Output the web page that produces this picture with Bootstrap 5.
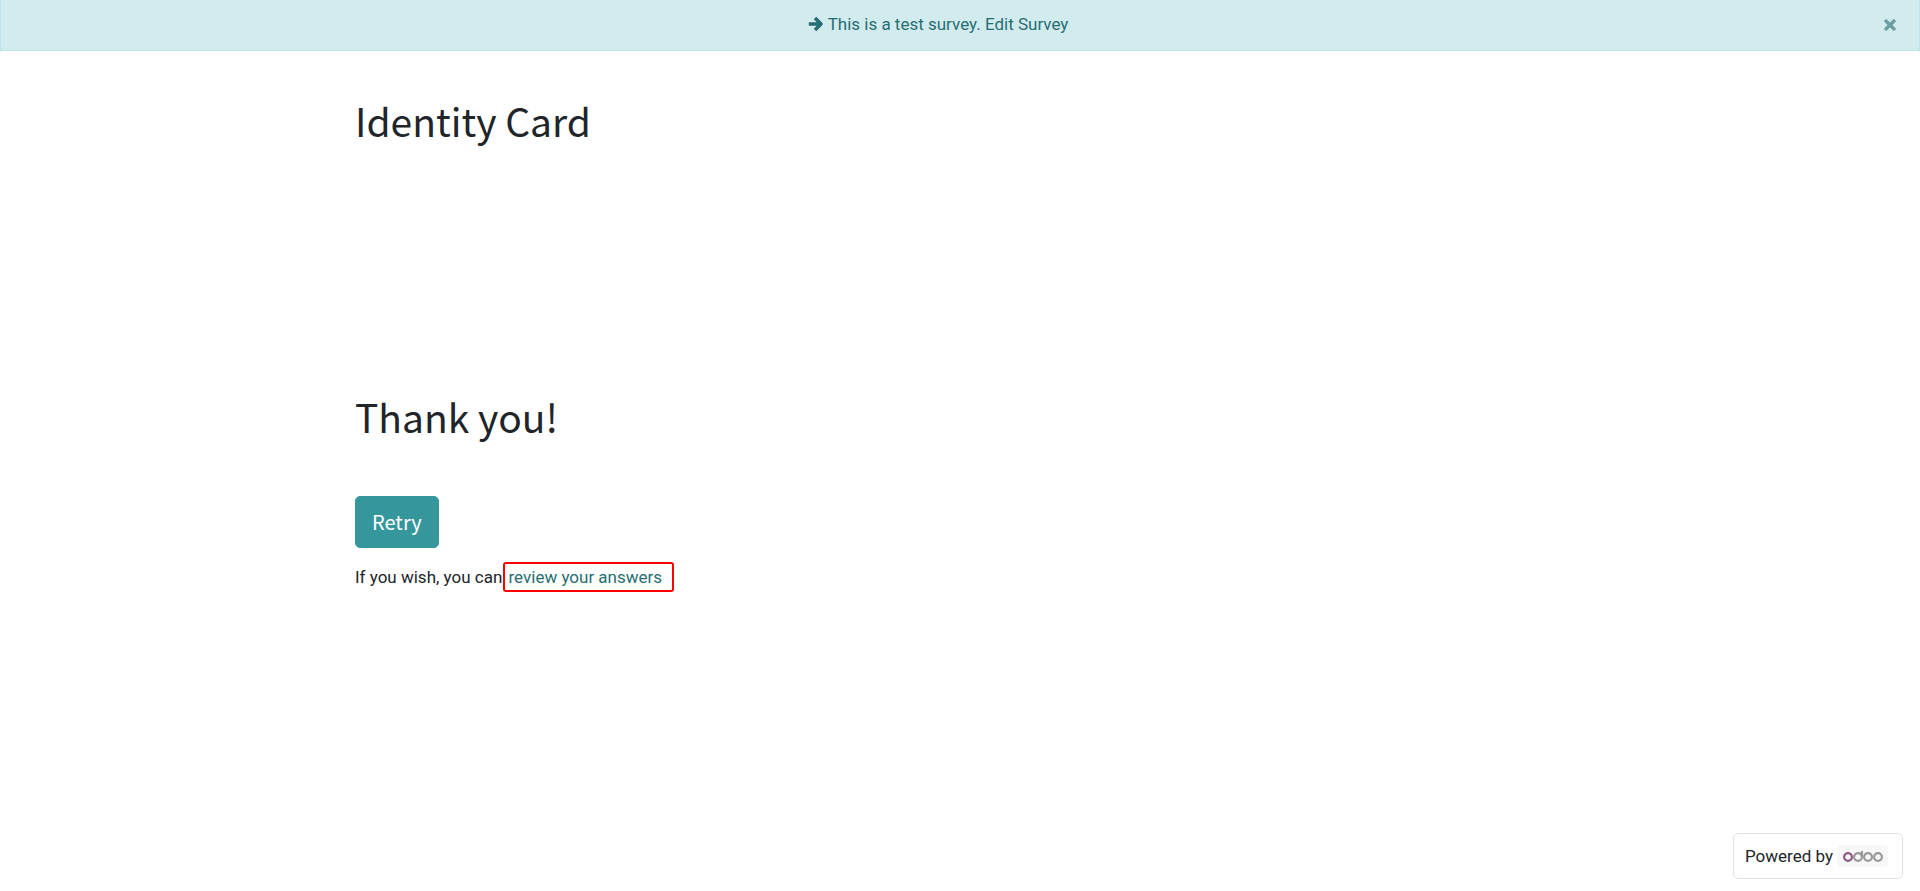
<!DOCTYPE html>
<html lang="en">
<head>
<meta charset="utf-8">
<meta name="viewport" content="width=device-width, initial-scale=1">
<title>Identity Card</title>
<link href="https://cdn.jsdelivr.net/npm/bootstrap@5.3.0/dist/css/bootstrap.min.css" rel="stylesheet">
<style>
  body { font-family: Roboto, "Liberation Sans", sans-serif; font-size: 17px; line-height: 26px; color: #212529; }
  h1, .btn-retry { font-family: "Noto Sans CJK SC", "Noto Sans", sans-serif; font-weight: 400; }
  h1 { font-size: 39px; line-height: 48px; }
  a { color: #276e72; text-decoration: none; }
  .test-alert { background: #d2ebef; border: 1px solid #b9e6ea; border-top: 0; color: #276e72; padding: 11px 60px 13px 16px; }
  .test-alert .close-btn { color: #276e72; opacity: .6; width: 58px; }
  .survey-wrap { max-width: 1240px; padding: 0 15px; }
  .survey-title { padding-top: 45px; min-height: 341px; }
  .survey-retry { margin-top: 56px; }
  .btn-retry { --bs-btn-color: #fff; --bs-btn-bg: #35979c; --bs-btn-border-color: #35979c; --bs-btn-hover-color: #fff; --bs-btn-hover-bg: #2d8084; font-size: 20px; line-height: 30px; padding: 10px 16px; border-radius: 5px; }
  .review-link { outline: 2px solid #f00; border-radius: 1px; padding: 3px 10px 3px 4px; margin-left: -2px; }
  .brand-box { border: 1px solid #dee2e6; border-radius: 5px; padding: 9px 14px 9px 11px; right: 17px; bottom: 12px; }
  .logo-chip { background: #f7f7f7; border-radius: 4px; padding: 4px 5px 4px 6px; }
</style>
</head>
<body class="min-vh-100 position-relative">
<div class="test-alert d-flex justify-content-center position-relative" role="alert">
  <a href="#" class="d-flex align-items-center gap-1">
    <svg width="16" height="16" viewBox="0 0 16 16" fill="none" stroke="currentColor" stroke-width="3.6" aria-hidden="true"><path d="M.8 8H13M7 2L13 8L7 14" stroke-linejoin="round"/></svg>
    <span>This is a test survey. Edit Survey</span>
  </a>
  <button type="button" class="close-btn btn border-0 p-0 position-absolute top-0 end-0 h-100 d-flex align-items-center justify-content-center" aria-label="Close">
    <svg width="12" height="12" viewBox="0 0 12 12" stroke="currentColor" stroke-width="3.4" aria-hidden="true"><path d="M1 1L11 11M11 1L1 11"/></svg>
  </button>
</div>
<main class="survey-wrap container-fluid mx-auto">
  <div class="survey-title"><h1 class="m-0">Identity Card</h1></div>
  <h1 class="m-0">Thank you!</h1>
  <div class="survey-retry"><button type="button" class="btn btn-retry">Retry</button></div>
  <p class="mt-3 mb-0">If you wish, you can <a href="#" class="review-link">review your answers</a></p>
</main>
<footer class="brand-box position-absolute d-flex align-items-center gap-1 bg-white">
  <span>Powered by</span>
  <a href="#" class="logo-chip d-flex" aria-label="odoo">
    <svg width="40" height="14" viewBox="0 0 40 14" fill="none" stroke="#999" stroke-width="2.2" aria-hidden="true">
      <circle cx="5" cy="8" r="3.9" stroke="#8f5b86"/><circle cx="15" cy="8" r="3.9"/><path d="M18.9 8V2"/><circle cx="25" cy="8" r="3.9"/><circle cx="35" cy="8" r="3.9"/>
    </svg>
  </a>
</footer>
<script src="https://cdn.jsdelivr.net/npm/bootstrap@5.3.0/dist/js/bootstrap.bundle.min.js"></script>
</body>
</html>
